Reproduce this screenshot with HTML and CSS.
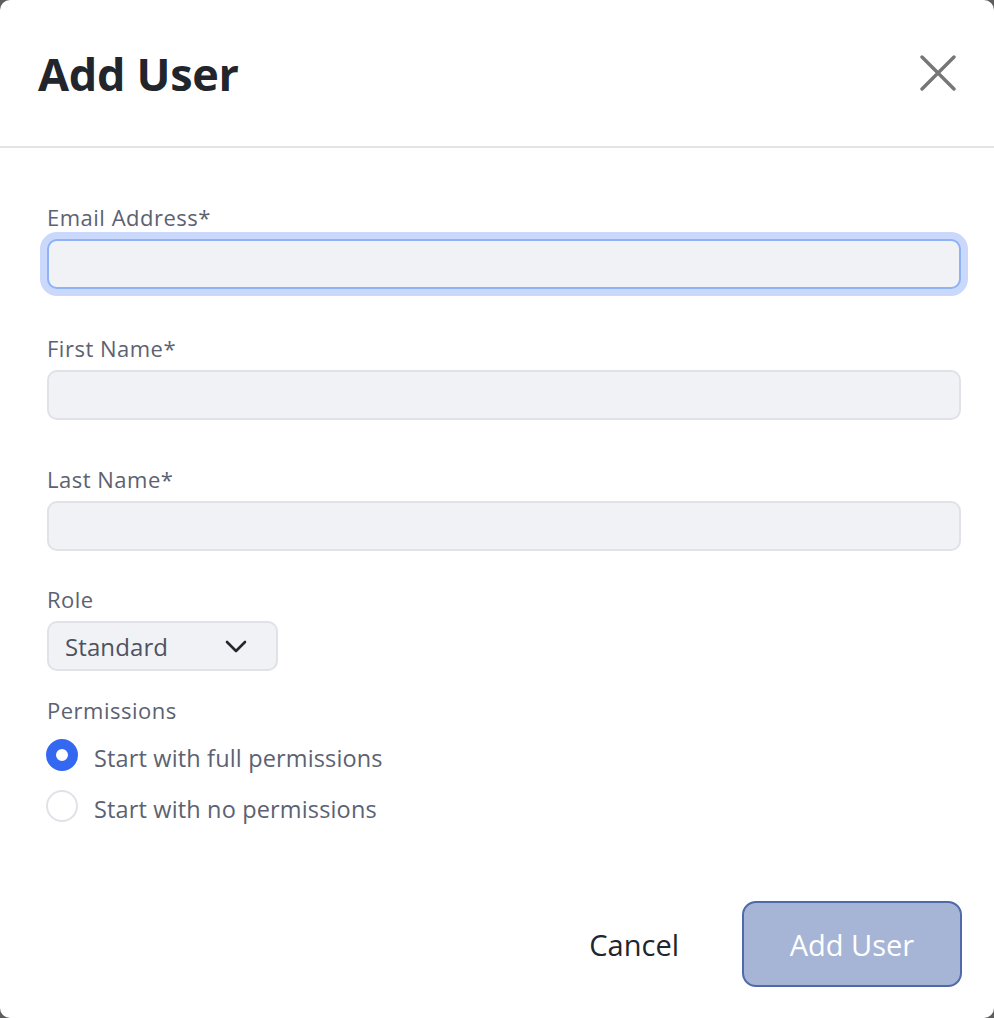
FILE: index.html
```html
<!DOCTYPE html>
<html lang="en">
<head>
<meta charset="utf-8">
<title>Add User</title>
<link rel="stylesheet" href="styles.css">
</head>
<body>
<div class="dialog">
  <header class="dialog-header">
    <h1 class="dialog-title">Add User</h1>
    <button class="close-btn" aria-label="Close">
      <svg width="36" height="36" viewBox="0 0 36 36"><path d="M2 2 L34 34 M34 2 L2 34" stroke="#767676" stroke-width="3.4" stroke-linecap="round" fill="none"/></svg>
    </button>
  </header>
  <form class="dialog-body">
    <div class="field first">
      <label class="field-label">Email Address*</label>
      <input class="text-input focused" type="text">
    </div>
    <div class="field">
      <label class="field-label">First Name*</label>
      <input class="text-input" type="text">
    </div>
    <div class="field">
      <label class="field-label">Last Name*</label>
      <input class="text-input" type="text">
    </div>
    <div class="field role">
      <label class="field-label">Role</label>
      <div class="select">
        <span class="select-value">Standard</span>
        <svg class="chevron" width="22" height="14" viewBox="0 0 22 14"><path d="M2 2 L11 11 L20 2" stroke="#23262b" stroke-width="2.6" stroke-linecap="round" stroke-linejoin="round" fill="none"/></svg>
      </div>
    </div>
    <div class="field perms">
      <div class="field-label">Permissions</div>
      <div class="radio-row">
        <span class="radio checked"></span>
        <span class="radio-text">Start with full permissions</span>
      </div>
      <div class="radio-row">
        <span class="radio"></span>
        <span class="radio-text">Start with no permissions</span>
      </div>
    </div>
  </form>
  <footer class="dialog-footer">
    <button class="cancel-btn" type="button">Cancel</button>
    <button class="primary-btn" type="button">Add User</button>
  </footer>
</div>
</body>
</html>
```
FILE: styles.css
```css
html, body {
  margin: 0;
  padding: 0;
  background: #5e5e5e;
}
body {
  font-family: "Open Sans", "Noto Sans", sans-serif;
}
.dialog {
  width: 994px;
  height: 1018px;
  background: #ffffff;
  border-radius: 10px;
  overflow: hidden;
  display: flex;
  flex-direction: column;
}
.dialog-header {
  height: 146px;
  border-bottom: 2px solid #e2e4e8;
  display: flex;
  align-items: center;
  justify-content: space-between;
  padding: 0 38px 0 38px;
  box-sizing: content-box;
}
.dialog-title {
  margin: 0;
  font-size: 45px;
  font-weight: 700;
  color: #22252b;
  letter-spacing: -0.3px;
  line-height: 1;
}
.close-btn {
  border: 0;
  background: none;
  padding: 0;
  width: 36px;
  height: 36px;
  display: flex;
}
.dialog-body {
  padding: 54px 33px 0 47px;
  margin: 0;
}
.field {
  margin-top: 44px;
  display: flex;
  flex-direction: column;
}
.field.first { margin-top: 0; }
.field.role { margin-top: 33px; }
.field.perms { margin-top: 24px; }
.field-label {
  font-size: 22px;
  line-height: 30px;
  color: #5c6271;
  letter-spacing: 0.5px;
  margin-bottom: 7px;
}
.text-input {
  height: 50px;
  box-sizing: border-box;
  border: 2px solid #e0e2e7;
  background: #f1f2f6;
  border-radius: 10px;
  font-family: inherit;
  font-size: 22px;
  padding: 0 16px;
  outline: none;
  width: 100%;
  margin: 0;
}
.text-input.focused {
  border-color: #8db3f6;
  box-shadow: 0 0 0 7px #c9d8fb;
}
.select {
  width: 231px;
  height: 50px;
  box-sizing: border-box;
  border: 2px solid #e0e2e7;
  background: #f1f2f6;
  border-radius: 10px;
  display: flex;
  align-items: center;
  justify-content: space-between;
  padding: 0 29px 0 16px;
}
.select-value {
  font-size: 24px;
  color: #4d5260;
  letter-spacing: 0.1px;
}
.chevron { display: block; margin-top: 2px; }
.radio-row {
  display: flex;
  align-items: center;
  gap: 16px;
  height: 32px;
  margin-top: 7px;
}
.radio-row + .radio-row { margin-top: 19px; }
.radio {
  width: 32px;
  height: 32px;
  box-sizing: border-box;
  border-radius: 50%;
  border: 2px solid #e0e2e7;
  background: #fff;
  flex: none;
  margin-left: -1px;
}
.radio.checked {
  border: 10px solid #3568f1;
  background: #fff;
}
.radio-text {
  font-size: 23.5px;
  color: #5c6271;
  letter-spacing: 0.15px;
  margin-top: 5px;
}
.dialog-footer {
  margin-top: auto;
  padding: 0 32px 31px 0;
  display: flex;
  justify-content: flex-end;
  align-items: center;
}
.cancel-btn {
  border: 0;
  background: none;
  padding: 0;
  margin-right: 63px;
  font-family: inherit;
  font-size: 29px;
  color: #22252b;
}
.primary-btn {
  width: 220px;
  height: 86px;
  box-sizing: border-box;
  border: 2px solid #4f69a9;
  border-radius: 14px;
  background: #a6b5d6;
  color: #ffffff;
  font-family: inherit;
  font-size: 29px;
}
```
